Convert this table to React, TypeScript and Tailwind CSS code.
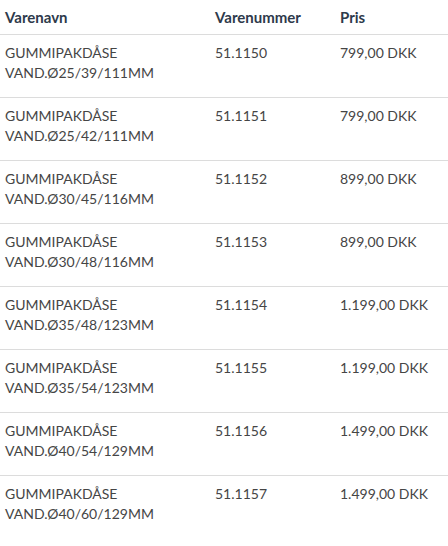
const rows = [
  { name: "GUMMIPAKDÅSE VAND.Ø25/39/111MM", nr: "51.1150", price: "799,00 DKK" },
  { name: "GUMMIPAKDÅSE VAND.Ø25/42/111MM", nr: "51.1151", price: "799,00 DKK" },
  { name: "GUMMIPAKDÅSE VAND.Ø30/45/116MM", nr: "51.1152", price: "899,00 DKK" },
  { name: "GUMMIPAKDÅSE VAND.Ø30/48/116MM", nr: "51.1153", price: "899,00 DKK" },
  { name: "GUMMIPAKDÅSE VAND.Ø35/48/123MM", nr: "51.1154", price: "1.199,00 DKK" },
  { name: "GUMMIPAKDÅSE VAND.Ø35/54/123MM", nr: "51.1155", price: "1.199,00 DKK" },
  { name: "GUMMIPAKDÅSE VAND.Ø40/54/129MM", nr: "51.1156", price: "1.499,00 DKK" },
  { name: "GUMMIPAKDÅSE VAND.Ø40/60/129MM", nr: "51.1157", price: "1.499,00 DKK" },
];

export default function App() {
  return (
    <div className="w-[448px] bg-white font-['Lato','Noto_Sans',sans-serif] text-[14px] leading-[20px]">
      <table className="w-full border-collapse text-left">
        <thead>
          <tr className="border-b border-[#dcdcdc] text-[15px] text-[#2e3a4b]">
            <th className="w-[210px] pb-[7px] pl-[5px] pt-[7px] font-bold">Varenavn</th>
            <th className="w-[125px] pb-[7px] pl-[5px] pt-[7px] font-bold">Varenummer</th>
            <th className="pb-[7px] pl-[5px] pt-[7px] font-bold">Pris</th>
          </tr>
        </thead>
        <tbody className="text-[#454545]">
          {rows.map((r) => {
            const [a, b] = r.name.split(" ");
            return (
              <tr key={r.nr} className="border-b border-[#dcdcdc] align-top last:border-b-0">
                <td className="pb-[14px] pl-[5px] pt-[8px]">
                  {a}
                  <br />
                  {b}
                </td>
                <td className="pb-[14px] pl-[5px] pt-[8px]">{r.nr}</td>
                <td className="pb-[14px] pl-[5px] pt-[8px]">{r.price}</td>
              </tr>
            );
          })}
        </tbody>
      </table>
    </div>
  );
}
